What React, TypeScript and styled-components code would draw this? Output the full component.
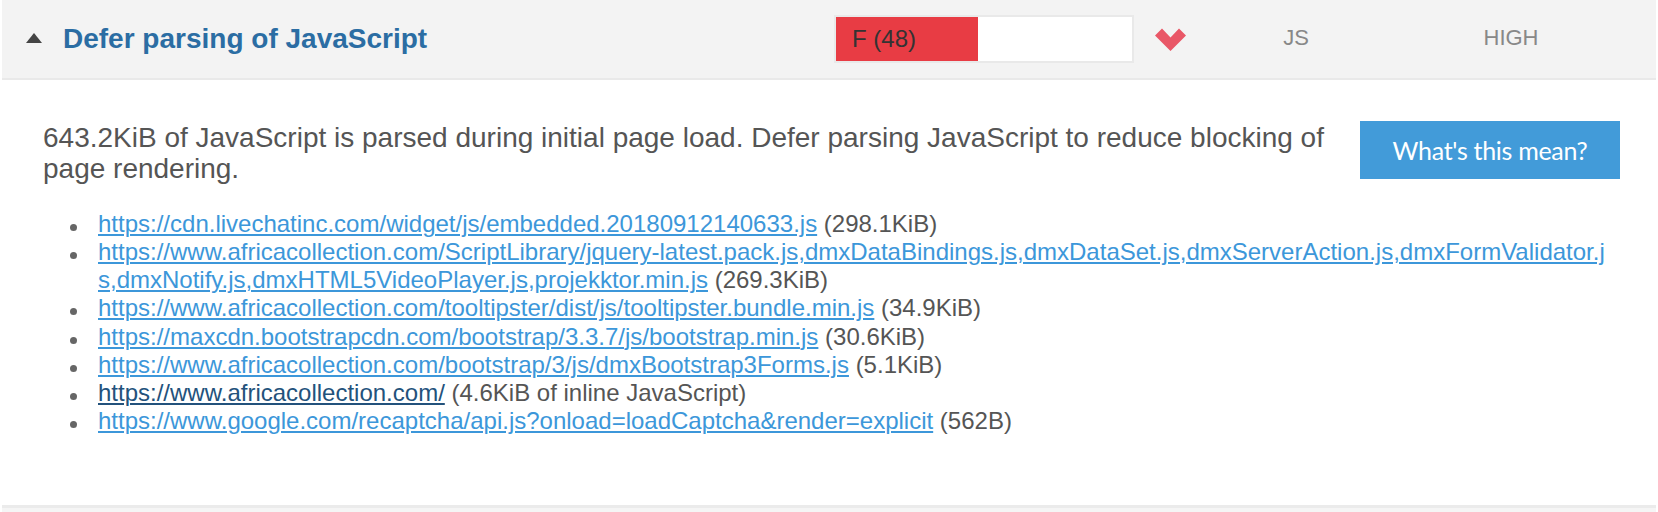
import { createGlobalStyle, styled } from "styled-components";

type TResource = {
  url: string;
  note: string;
  visited?: boolean;
};

const resources: TResource[] = [
  {
    url: "https://cdn.livechatinc.com/widget/js/embedded.20180912140633.js",
    note: "(298.1KiB)",
  },
  {
    url: "https://www.africacollection.com/ScriptLibrary/jquery-latest.pack.js,dmxDataBindings.js,dmxDataSet.js,dmxServerAction.js,dmxFormValidator.js,dmxNotify.js,dmxHTML5VideoPlayer.js,projekktor.min.js",
    note: "(269.3KiB)",
  },
  {
    url: "https://www.africacollection.com/tooltipster/dist/js/tooltipster.bundle.min.js",
    note: "(34.9KiB)",
  },
  {
    url: "https://maxcdn.bootstrapcdn.com/bootstrap/3.3.7/js/bootstrap.min.js",
    note: "(30.6KiB)",
  },
  {
    url: "https://www.africacollection.com/bootstrap/3/js/dmxBootstrap3Forms.js",
    note: "(5.1KiB)",
  },
  {
    url: "https://www.africacollection.com/",
    note: "(4.6KiB of inline JavaScript)",
    visited: true,
  },
  {
    url: "https://www.google.com/recaptcha/api.js?onload=loadCaptcha&render=explicit",
    note: "(562B)",
  },
];

const GlobalStyle = createGlobalStyle`
  html, body {
    margin: 0;
    padding: 0;
    background: #ffffff;
  }
  body {
    font-family: "Liberation Sans", Arial, Helvetica, sans-serif;
    color: #555555;
  }
`;

const Panel = styled.section`
  margin: 0 2px;
  display: flex;
  flex-direction: column;
`;

const Header = styled.div`
  height: 78px;
  display: grid;
  grid-template-columns: 832px 300px 72px 180px 250px 1fr;
  align-items: center;
  background: #f3f3f3;
  border-bottom: 2px solid #e9e9e9;
`;

const TitleCell = styled.div`
  display: flex;
  align-items: center;
  gap: 21px;
  padding-left: 24px;
`;

const Caret = styled.span`
  width: 0;
  height: 0;
  border-left: 8px solid transparent;
  border-right: 8px solid transparent;
  border-bottom: 10px solid #444444;
  margin-top: -2px;
`;

const Title = styled.h3`
  margin: 0;
  font-size: 28px;
  font-weight: 700;
  line-height: 32px;
  color: #2b6da3;
`;

const ScoreBar = styled.div`
  height: 48px;
  box-sizing: border-box;
  border: 2px solid #e9e9e9;
  background: #ffffff;
  display: flex;
`;

const ScoreFill = styled.div`
  height: 100%;
  background: #e83c44;
  display: flex;
  align-items: center;
  padding-left: 16px;
  box-sizing: border-box;
  font-size: 24px;
  color: #333333;
  white-space: nowrap;
`;

const ChevronCell = styled.div`
  display: flex;
  align-items: center;
  padding-left: 21px;
  padding-top: 1px;
`;

const MetaCell = styled.div`
  text-align: center;
  font-size: 22px;
  color: #888888;
  margin-top: -3px;
`;

const Body = styled.div`
  padding: 41px 36px 70px 41px;
  border-bottom: 3px solid #ebebeb;
  display: flex;
  flex-direction: column;
  gap: 26px;
`;

const Summary = styled.div`
  display: flex;
  align-items: flex-start;
  gap: 30px;
`;

const Description = styled.p`
  flex: 1;
  margin: 1px 0 0;
  font-size: 28px;
  line-height: 31px;
  color: #555555;
`;

const HelpButton = styled.button`
  flex-shrink: 0;
  width: 260px;
  height: 58px;
  border: none;
  border-radius: 0;
  background: #429bd9;
  color: #ffffff;
  font-family: Lato, "Open Sans", sans-serif;
  font-size: 25px;
  letter-spacing: -0.3px;
  cursor: pointer;
`;

const ResourceList = styled.ul`
  list-style: none;
  margin: 0 10px 0 0;
  padding: 0;
`;

const ResourceItem = styled.li`
  display: flex;
  align-items: flex-start;
  font-size: 24px;
  line-height: 28.15px;
  color: #555555;
  word-break: break-all;
`;

const Bullet = styled.span`
  flex-shrink: 0;
  width: 55px;
  display: flex;
  padding-top: 14px;
  padding-left: 27px;
  box-sizing: border-box;
  &::after {
    content: "";
    width: 7px;
    height: 7px;
    border-radius: 50%;
    background: #666666;
  }
`;

const ResourceText = styled.span`
  min-width: 0;
`;

const ResourceLink = styled.a<{ $visited?: boolean }>`
  color: ${({ $visited }) => ($visited ? "#23527c" : "#3c97da")};
  text-decoration: underline;
  text-decoration-thickness: 1.5px;
  text-underline-offset: 2px;
`;

const NextRow = styled.div`
  height: 6px;
  background: #f5f5f5;
`;

const Chevron = () => (
  <svg width="31" height="24" viewBox="0 0 31 24">
    <polygon
      points="0,7.5 7,0.5 15.5,9.5 24,0.5 31,7.5 15.5,23"
      fill="#e95767"
    />
  </svg>
);

export default function App() {
  const score = 48;
  return (
    <>
      <GlobalStyle />
      <Panel>
        <Header>
          <TitleCell>
            <Caret />
            <Title>Defer parsing of JavaScript</Title>
          </TitleCell>
          <ScoreBar>
            <ScoreFill style={{ width: `${score}%` }}>F ({score})</ScoreFill>
          </ScoreBar>
          <ChevronCell>
            <Chevron />
          </ChevronCell>
          <MetaCell>JS</MetaCell>
          <MetaCell>HIGH</MetaCell>
          <div />
        </Header>
        <Body>
          <Summary>
            <Description>
              643.2KiB of JavaScript is parsed during initial page load. Defer
              parsing JavaScript to reduce blocking of page rendering.
            </Description>
            <HelpButton type="button">What's this mean?</HelpButton>
          </Summary>
          <ResourceList>
            {resources.map((item) => (
              <ResourceItem key={item.url}>
                <Bullet />
                <ResourceText>
                  <ResourceLink href="#" $visited={item.visited}>
                    {item.url}
                  </ResourceLink>{" "}
                  {item.note}
                </ResourceText>
              </ResourceItem>
            ))}
          </ResourceList>
        </Body>
        <NextRow />
      </Panel>
    </>
  );
}
